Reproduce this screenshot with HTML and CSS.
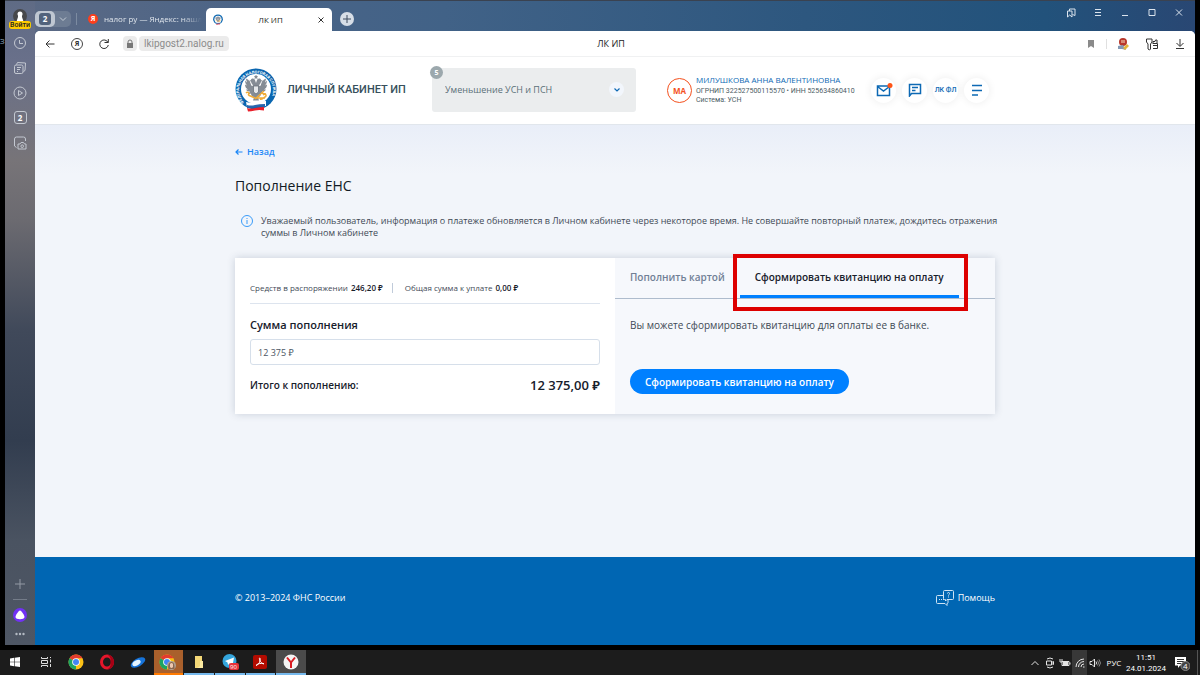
FILE: index.html
```html
<!DOCTYPE html>
<html lang="ru">
<head>
    <meta charset="UTF-8">
    <meta name="viewport" content="width=device-width, initial-scale=1.0">
    <title>ЛК ИП</title>
    <link rel="stylesheet" href="styles.css">
</head>
<body>
    <svg class="sprite" aria-hidden="true">
        <defs>
            <path id="ringPath" d="M9 34.500 A17 17 0 1 1 33 34.500"/>
            <symbol id="emblem" viewBox="0 0 42 44">
                <circle cx="21" cy="21" r="20.500" fill="#0a66b0"/>
                <circle cx="21" cy="21" r="15" fill="#fff"/>
                <g fill="#858c95">
                    <path d="M21 7l1 1h1l-1 1.500 1 1h-4l1-1L19 8h1z"/>
                    <path d="M20 12c-1-2-4-2-4 0l-2 1 2 .5c0 2 2 3 2 4-1 1-2 0-2-1-1-4-3-5-5-6 0 2 1 3 1 4l-2-2c0 2 1 4 2 5l-2-1c0 2 1 4 3 5l-2 0c1 2 3 2 4 2l-2 3 3-1c0 2 1 3 3 4l-1 3h6l-1-3c2-1 3-2 3-4l3 1-2-3c1 0 3 0 4-2h-2c2-1 3-3 3-5l-2 1c1-1 2-3 2-5l-2 2c0-1 1-2 1-4-2 1-4 2-5 6 0 1-1 2-2 1 0-1 2-2 2-4l2-.5-2-1c0-2-3-2-4 0l-1 3z"/>
                </g>
                <path d="M18.500 18h5v6L21 26l-2.500-2z" fill="#e4e7ea" stroke="#6a727c" stroke-width=".8"/>
                <path d="M11 25c2-2 4 0 2 2m0 0l7 3 10 0M29 23l-9 8M28 27c3-2 4 1 2 2s-3 3-5 2M26 25l5 1" fill="none" stroke="#f0ac38" stroke-width="1.500"/>
                <path d="M11 34q5 1 9 0t11-1v5q-6-1-10 0t-9 1z" fill="#fff"/>
                <path d="M12 37q4 1 8 0t10-1v3q-5-1-9 0t-9 1z" fill="#2a66ad"/>
                <path d="M12 40q4 1 8 0t9-1v3.500q-5-1-9 0t-7 1z" fill="#e9202b"/>
            </symbol>
            <symbol id="chrome" viewBox="0 0 16 16">
                <circle cx="8" cy="8" r="7.500" fill="#fbc116"/>
                <path d="M8 8L1.500 4.250A7.500 7.500 0 0 1 14.500 4.250z" fill="#e33b2e"/>
                <path d="M8 8L1.500 4.250A7.500 7.500 0 0 0 8 15.500z" fill="#1da462"/>
                <path d="M8 4.250h6.500L11 9.750z" fill="#fbc116"/>
                <circle cx="8" cy="8" r="3.800" fill="#fff"/>
                <circle cx="8" cy="8" r="3" fill="#4285f4"/>
            </symbol>
        </defs>
    </svg>

    <div class="desktop">
        <span class="desktop-label">З</span>

        <div class="browser">
            <aside class="sidebar">
                <button class="login" aria-label="Профиль">
                    <svg width="14" height="14" viewBox="0 0 14 14"><circle cx="7" cy="7" r="7" fill="#47484b"/><circle cx="7" cy="5" r="2.500" fill="#fff"/><path d="M5 6h4v2l2 6H3l2-6z" fill="#fff"/></svg>
                    <span class="login-badge">Войти</span>
                </button>
                <button class="side-btn" aria-label="История">
                    <svg width="14" height="14" viewBox="0 0 14 14"><circle cx="7" cy="7" r="5.500"/><path d="M6.500 4v3.500H10"/></svg>
                </button>
                <button class="side-btn" aria-label="Коллекции">
                    <svg width="14" height="14" viewBox="0 0 14 14"><path d="M3.500 3.500l1-2 8 .5-.5 7.500-1.500 1"/><rect x="1.500" y="4" width="8.500" height="8.500" rx="1.500"/><path d="M4 6.500h4M4 8.500h3M4 10.500h1"/></svg>
                </button>
                <button class="side-btn" aria-label="Видео">
                    <svg width="14" height="14" viewBox="0 0 14 14"><circle cx="7" cy="7" r="6"/><path d="M5.500 4.500v5L9.500 7z"/></svg>
                </button>
                <button class="side-btn" aria-label="Вкладки">
                    <span class="tab-count">2</span>
                </button>
                <button class="side-btn" aria-label="Скриншот">
                    <svg width="14" height="14" viewBox="0 0 14 14"><path d="M3.500 11.500L1.500 10V3q0-2 2-2h7q2 0 2 2v2"/><path d="M5 8h2l1-1.500h2.500L11.500 8H13v5H5z"/><circle cx="9.200" cy="10.200" r="1.300"/></svg>
                </button>
                <div class="side-bottom">
                    <button class="side-plus" aria-label="Добавить">
                        <svg width="10" height="10" viewBox="0 0 10 10"><path d="M5 0v10M0 5h10"/></svg>
                    </button>
                    <span class="side-line"></span>
                    <button class="alice" aria-label="Алиса">
                        <svg width="14" height="14" viewBox="0 0 14 14"><circle cx="7" cy="7" r="7" fill="#7131f5"/><path d="M7 2.500c1.500 0 4.500 5 4.500 6.500 0 3-9 3-9 0C2.500 7.500 5.500 2.500 7 2.500z" fill="#fff"/></svg>
                    </button>
                    <button class="side-more" aria-label="Ещё">
                        <svg width="10" height="4" viewBox="0 0 10 4"><circle cx="1.500" cy="2" r="1.200"/><circle cx="5" cy="2" r="1.200"/><circle cx="8.500" cy="2" r="1.200"/></svg>
                    </button>
                </div>
            </aside>

            <div class="window">
                <div class="tabbar">
                    <button class="group">
                        <span class="group-num"><b>2</b></span>
                        <svg width="8" height="6" viewBox="0 0 8 6"><path d="M1 1.500l3 3 3-3" fill="none" stroke="#c4ccd6"/></svg>
                    </button>
                    <span class="tab-sep"></span>
                    <a class="tab" href="#">
                        <span class="ya-icon">Я</span>
                        <span class="tab-title">налог ру — Яндекс: нашл</span>
                    </a>
                    <div class="tab-active">
                        <svg width="10" height="11"><use href="#emblem"/></svg>
                        <span>ЛК ИП</span>
                        <button aria-label="Закрыть вкладку"><svg width="6" height="6" viewBox="0 0 6 6"><path d="M.5.5l5 5M5.500.5l-5 5" stroke="#333"/></svg></button>
                    </div>
                    <button class="new-tab" aria-label="Новая вкладка">
                        <svg width="8" height="8" viewBox="0 0 8 8"><path d="M4 0v8M0 4h8" stroke="#3c4a5e"/></svg>
                    </button>
                    <div class="controls">
                        <button aria-label="Закладки"><svg width="10" height="10" viewBox="0 0 10 10"><path d="M1.500 3H6v6L3.700 7 1.500 9zM3.500 3V1H9v6.500L6.500 6.500"/></svg></button>
                        <button aria-label="Меню"><svg width="10" height="10" viewBox="0 0 10 10"><path d="M2 1.500h6M2 4.500h6M2 7.500h6"/></svg></button>
                        <button aria-label="Свернуть"><svg width="10" height="10" viewBox="0 0 10 10"><path d="M2 7.500h6"/></svg></button>
                        <button aria-label="Развернуть"><svg width="10" height="10" viewBox="0 0 10 10"><path d="M2 1.500h6v6H2z"/></svg></button>
                        <button aria-label="Закрыть"><svg width="10" height="10" viewBox="0 0 10 10"><path d="M2 1.500l6 6M8 1.500l-6 6"/></svg></button>
                    </div>
                </div>

                <div class="page">
                    <div class="toolbar">
                        <div class="nav">
                            <button aria-label="Назад"><svg width="12" height="12" viewBox="0 0 12 12"><path d="M10.500 6H2M5.500 2.500L2 6l3.500 3.500"/></svg></button>
                            <button class="ya-round" aria-label="Яндекс">Я</button>
                            <button aria-label="Обновить"><svg width="12" height="12" viewBox="0 0 12 12"><path d="M10 4.500A4.300 4.300 0 1 0 10.300 7M6.500 4.500h3.800V1"/></svg></button>
                            <div class="address">
                                <button class="lock" aria-label="Защищённое соединение"><svg width="8" height="10" viewBox="0 0 8 10"><path d="M2 5V3a2 2 0 0 1 4 0v2" fill="none" stroke="#777"/><rect x="1" y="4" width="6" height="5" fill="#777" stroke="none"/></svg></button>
                                <a class="url" href="#">lkipgost2.nalog.ru</a>
                            </div>
                        </div>
                        <span class="toolbar-title">ЛК ИП</span>
                        <div class="tools">
                            <button aria-label="В закладки"><svg width="12" height="12" viewBox="0 0 12 12"><path d="M3 2h6v8L6 8l-3 2z" fill="#8a8a8a" stroke="none"/></svg></button>
                            <span class="tool-sep"></span>
                            <button aria-label="Расширение"><svg width="14" height="14" viewBox="0 0 14 14"><g stroke="none"><circle cx="7" cy="5" r="4" fill="#b8372a"/><path d="M5 3h4v3H5z" fill="#d88a74"/><path d="M2 9l5-1 3 5-4-1-4 0z" fill="#8398b4"/><path d="M7 11l4-4 2 2-4 4z" fill="#e2b43b"/></g></svg></button>
                            <button aria-label="Пароли"><svg width="14" height="14" viewBox="0 0 14 14"><path d="M3 7L1.500 5V2H7v3L5.500 7v5L4.500 13 3 12zM7.500 6.500h5v5H8"/><path d="M8 6V4.500h2l.5-1.500h1.500v3M8 8.500h4"/></svg></button>
                            <button aria-label="Загрузки"><svg width="12" height="12" viewBox="0 0 12 12"><path d="M6 1v7M2.500 5L6 8.500 9.500 5M2 10.500h8"/></svg></button>
                        </div>
                    </div>

                    <header class="header">
                        <div class="container header-row">
                            <a class="brand" href="#">
                                <svg width="42" height="44" viewBox="0 0 42 44">
                                    <use href="#emblem"/>
                                    <text class="ring-text"><textPath href="#ringPath">ФЕДЕРАЛЬНАЯ НАЛОГОВАЯ СЛУЖБА</textPath></text>
                                </svg>
                                <span>ЛИЧНЫЙ КАБИНЕТ ИП</span>
                            </a>
                            <div class="notice">
                                <select aria-label="Уведомления">
                                    <option>Уменьшение УСН и ПСН</option>
                                </select>
                                <span class="notice-count">5</span>
                                <span class="notice-arrow"><svg width="6" height="4" viewBox="0 0 6 4"><path d="M.5.5L3 3 5.500.5" fill="none" stroke="#0d69b4" stroke-width="1.200"/></svg></span>
                            </div>
                            <div class="user">
                                <span class="avatar">МА</span>
                                <div>
                                    <a class="user-name" href="#">МИЛУШКОВА АННА ВАЛЕНТИНОВНА</a>
                                    <p>ОГРНИП 322527500115570 • ИНН 525634860410</p>
                                    <p>Система: УСН</p>
                                </div>
                            </div>
                            <nav class="actions">
                                <button aria-label="Сообщения"><svg width="18" height="16" viewBox="0 0 18 16"><path d="M2.500 4h12v9.500h-12zM2.500 4.500l6 4.500 6-4.500"/><circle cx="15" cy="3.500" r="2.500" fill="#ff5416" stroke="none"/></svg></button>
                                <button aria-label="Чат"><svg width="14" height="14" viewBox="0 0 14 14"><path d="M1.500 13V1.500h11v9h-9zM4 4.500h6M4 7.500h3.500"/></svg></button>
                                <button>ЛК ФЛ</button>
                                <button aria-label="Меню"><svg width="12" height="12" viewBox="0 0 12 12"><path d="M1 1.500h10M1 6.500h10M1 11h6"/></svg></button>
                            </nav>
                        </div>
                    </header>

                    <main class="main">
                        <div class="container">
                            <a class="back" href="#">
                                <svg width="8" height="6" viewBox="0 0 8 6"><path d="M7.500 3H1M3.500.5L1 3l2.500 2.500" fill="none" stroke="#1a86f7" stroke-width="1.200"/></svg>
                                Назад
                            </a>
                            <h1>Пополнение ЕНС</h1>
                            <div class="info">
                                <svg width="12" height="12" viewBox="0 0 12 12"><circle cx="6" cy="6" r="5.500" fill="none" stroke="#3a9bf8"/><path d="M6 3v1M6 5v4" stroke="#3a9bf8"/></svg>
                                <p>Уважаемый пользователь, информация о платеже обновляется в Личном кабинете через некоторое время. Не совершайте повторный платеж, дождитесь отражения суммы в Личном кабинете</p>
                            </div>

                            <section class="card">
                                <form class="payment">
                                    <div class="balance">
                                        <span>Средств в распоряжении <b>246,20 ₽</b></span>
                                        <span class="balance-due">Общая сумма к уплате <b>0,00 ₽</b></span>
                                    </div>
                                    <label for="amount">Сумма пополнения</label>
                                    <input type="text" id="amount" name="amount" value="12 375 ₽">
                                    <div class="total">
                                        <span>Итого к пополнению:</span>
                                        <strong>12 375,00 ₽</strong>
                                    </div>
                                </form>
                                <div class="method">
                                    <div class="tabs" role="tablist">
                                        <button role="tab" class="method-tab">Пополнить картой</button>
                                        <button role="tab" class="method-tab selected" aria-selected="true">Сформировать квитанцию на оплату</button>
                                    </div>
                                    <div class="method-body">
                                        <p>Вы можете сформировать квитанцию для оплаты ее в банке.</p>
                                        <button class="submit">Сформировать квитанцию на оплату</button>
                                    </div>
                                </div>
                            </section>
                        </div>
                    </main>

                    <footer class="footer">
                        <div class="container footer-row">
                            <span>© 2013–2024 ФНС России</span>
                            <a class="help" href="#">
                                <svg width="18" height="16" viewBox="0 0 18 16" fill="none" stroke="#cfe3f4"><path d="M8 5.500H1.500q-1 0-1 1v6q0 1 1 1H9l2 2v-2q1 0 1-1V10M3 9.500h1M5 9.500h1M7 9.500h1"/><path d="M8.500.5h8q1 0 1 1v7q0 1-1 1H11L9.500 11V9.500H8.500q-1 0-1-1v-7q0-1 1-1z"/><path d="M11.500 3.500q0-1 1-1t1 1-1 1.500v.5M12.500 6.500v1"/></svg>
                                Помощь
                            </a>
                        </div>
                    </footer>
                </div>
            </div>
        </div>

        <div class="taskbar">
            <div class="apps">
                <button aria-label="Пуск"><svg width="12" height="12" viewBox="0 0 12 12" fill="#fff"><path d="M1 2.500l4.200-.7v3.900H1zM5.800 1.700L11 1v4.700H5.800zM1 6.300h4.200v3.900L1 9.500zM5.800 6.300H11V11l-5.200-.7z"/></svg></button>
                <button aria-label="Представление задач"><svg width="12" height="12" viewBox="0 0 12 12" fill="none" stroke="#ddd"><path d="M1.500 1v1.500h6V1M1.500 11V9.500h6V11M1.500 4.500h6v3h-6zM10.500 1v1M10.500 3.500v3M10.500 8v3"/></svg></button>
                <button aria-label="Chrome"><svg width="16" height="16"><use href="#chrome"/></svg></button>
                <button aria-label="Opera"><svg width="16" height="16" viewBox="0 0 16 16"><ellipse cx="8" cy="8" rx="5.500" ry="6" fill="none" stroke="#e5162b" stroke-width="3"/><path d="M8 .5a7 7.500 0 0 1 0 15 5 6 0 0 0 3.500-4V4.500A5 6 0 0 0 8 .5z" fill="#a70014"/></svg></button>
                <button aria-label="Диск"><svg width="16" height="16" viewBox="0 0 16 16"><ellipse cx="8" cy="8.500" rx="8" ry="4" transform="rotate(-30 8 8.500)" fill="#1673d9"/><ellipse cx="6.500" cy="9" rx="4.500" ry="2.500" transform="rotate(-30 6.500 9)" fill="#e5f4ff"/></svg></button>
                <button class="app-alert" aria-label="Chrome, профиль"><svg width="18" height="16" viewBox="0 0 18 16"><use href="#chrome" width="16" height="16"/><circle cx="12.500" cy="11.500" r="4.500" fill="#b0a294"/><path d="M9.500 15c-1-3 0-7 3-7s3 4 3 7" fill="#8a6750"/><path d="M11 10q1.500-2 3 0v3q-1.500 2-3 0z" fill="#efc9b0"/></svg></button>
                <button class="app-open" aria-label="Проводник"><svg width="12" height="14" viewBox="0 0 12 14"><path d="M2 1h7v12H2z" fill="#f3d777"/><path d="M7 6h3v7H4l3-2z" fill="#fbe9a1"/></svg></button>
                <button class="app-open" aria-label="Telegram"><svg width="18" height="16" viewBox="0 0 18 16"><circle cx="8.500" cy="7" r="7" fill="#34a5dc"/><path d="M4 7l9-3.500-1.500 8-3-2-1.500 1.500-.5-2.500z" fill="#fff"/><rect x="8" y="9" width="10" height="7" rx="2" fill="#e8323a"/><text x="9" y="15" class="unread">90</text></svg></button>
                <button class="app-open" aria-label="Acrobat"><svg width="14" height="14" viewBox="0 0 14 14"><rect width="14" height="14" rx="2" fill="#b30b00"/><path d="M3 10.500c3-1 4.500-4 4.200-7C7 2.500 6 3 6.500 4.500c.8 2.800 2.500 4 4.500 4.300M3 10.500c1.500-2 5-2.500 8-1.700" fill="none" stroke="#fff"/></svg></button>
                <button class="app-open app-current" aria-label="Яндекс Браузер"><svg width="16" height="16" viewBox="0 0 16 16"><circle cx="8" cy="8" r="7.500" fill="#f4f4f4"/><path d="M4 3.500l4 5 4-5M8 8.500V14" fill="none" stroke="#d91c22" stroke-width="2"/></svg></button>
            </div>
            <div class="tray">
                <button aria-label="Скрытые значки"><svg width="10" height="10" viewBox="0 0 10 10"><path d="M1.500 7L5 3.500 8.500 7"/></svg></button>
                <button aria-label="Камера"><svg width="10" height="12" viewBox="0 0 10 12"><path d="M1.500 4h5v4h-5zM6.500 5.500l2-1v3l-2-1M2 2q3-2 6 0M2 10q3 2 6 0"/></svg></button>
                <button aria-label="Батарея"><svg width="12" height="10" viewBox="0 0 12 10"><path d="M3 3.500h7v4H3zM11 4.500v2M1 1v3h2V1"/><path d="M4 5.500h5" stroke-width="3"/></svg></button>
                <button class="wifi" aria-label="Сеть"><svg width="10" height="10" viewBox="0 0 10 10"><path d="M1 9a8 8 0 0 1 8-8M3.500 9A5.500 5.500 0 0 1 9 3.500M6 9a3 3 0 0 1 3-3M8 9h1.500"/></svg></button>
                <button aria-label="Звук"><svg width="12" height="10" viewBox="0 0 12 10"><path d="M1 3.500h2L5.500 1v8L3 6.500H1zM7 3.500q1 1.500 0 3"/><path d="M8.500 2.500q2 2.500 0 5M10 1.500q3 3.500 0 7" stroke="#888"/></svg></button>
                <button class="lang">РУС</button>
                <button class="clock"><time>11:51</time><span>24.01.2024</span></button>
                <button class="alerts" aria-label="Уведомления"><svg width="16" height="16" viewBox="0 0 16 16"><path d="M1 2h11v8.500H6L4 13v-2.500H1z" fill="#fff" stroke="none"/><path d="M3 4.500h7M3 6.500h7M3 8.500h4" stroke="#333"/><circle cx="11.500" cy="11" r="4.500" fill="#444" stroke="#888"/><text x="9" y="14" class="alert-num">4</text></svg></button>
            </div>
        </div>
    </div>
</body>
</html>
```
FILE: styles.css
```css
* {
    box-sizing: border-box;
}

body {
    margin: 0;
    font-family: 'Open Sans', 'Noto Sans', sans-serif;
    font-size: 9px;
    line-height: 12px;
    color: #3f4a56;
    background: #000;
}

button {
    display: flex;
    justify-content: center;
    align-items: center;
    padding: 0;
    border: none;
    background: none;
    font: inherit;
    color: inherit;
    cursor: pointer;
}

a {
    color: inherit;
    text-decoration: none;
}

p {
    margin: 0;
}

svg {
    display: block;
    flex: none;
}

.sprite {
    position: absolute;
    width: 0;
    height: 0;
}

.desktop {
    display: flex;
    flex-direction: column;
    min-height: 100vh;
    position: relative;
}

.desktop-label {
    position: absolute;
    left: 0;
    top: 35px;
    color: #8fa3b8;
    font-size: 8px;
}

/* Browser window */
.browser {
    flex: 1;
    display: flex;
    margin: 0 5px 5px;
    border-top: 1px solid #3a4250;
    background: linear-gradient(to right, #5d6a84 0, #4a6487 260px, #416287 440px, #2d577f 800px, #22527b 1040px, #294773 100%);
}

.sidebar {
    width: 30px;
    display: flex;
    flex-direction: column;
    align-items: center;
    background: linear-gradient(#5f6b85 0, #69708a 60px, #777478 160px, #6b6a70 220px, #40495a 330px, #323d4f 440px, #4a5361 540px, #4e5664 100%);
}

.sidebar svg {
    fill: none;
    stroke: #c3c8d1;
}

.login {
    position: relative;
    height: 29px;
    width: 30px;
}

.sidebar .login svg,
.sidebar .alice svg {
    stroke: none;
}

.login-badge {
    position: absolute;
    left: 4px;
    right: 4px;
    bottom: 1px;
    border-radius: 3px;
    background: #ffcc00;
    color: #222;
    font-family: Roboto, sans-serif;
    font-size: 7px;
    font-weight: 500;
    line-height: 8px;
}

.side-btn {
    width: 30px;
    height: 25px;
}

.tab-count {
    width: 13px;
    height: 13px;
    border: 1px solid #c3c8d1;
    border-radius: 3px;
    color: #fff;
    font-size: 8px;
    font-weight: 700;
    line-height: 11px;
}

.side-bottom {
    margin-top: auto;
    display: flex;
    flex-direction: column;
    align-items: center;
    gap: 8px;
    padding-bottom: 9px;
}

.side-plus {
    height: 14px;
}

.side-plus svg {
    opacity: .6;
}

.side-line {
    width: 14px;
    height: 1px;
    background: #747c89;
}

.alice {
    margin-bottom: 2px;
}

.sidebar .side-more svg {
    fill: #b4bac4;
    stroke: none;
}

.window {
    flex: 1;
    min-width: 0;
    display: flex;
    flex-direction: column;
}

.tabbar {
    display: flex;
    height: 30px;
    padding-top: 7px;
    color: #fff;
}

.group {
    width: 36px;
    height: 16px;
    margin-top: 3px;
    padding-right: 4px;
    justify-content: space-between;
    border-radius: 5px;
    background: #6d7c93;
}

.group-num {
    width: 20px;
    height: 16px;
    padding: 2px 4px;
    border-radius: 5px;
    background: #bfc7d2;
}

.group-num b {
    display: block;
    border-radius: 3px;
    background: #52637c;
    font-size: 8px;
    line-height: 12px;
}

.tab-sep {
    width: 1px;
    height: 12px;
    margin: 5px 11px 0 5px;
    background: #7c8ba1;
}

.tab {
    display: flex;
    align-items: center;
    gap: 6px;
    width: 112px;
    margin-right: 6px;
    height: 22px;
    font-size: 8px;
}

.ya-icon {
    flex: none;
    width: 10px;
    height: 10px;
    border-radius: 50%;
    background: #fc3f1d;
    font-size: 7px;
    font-weight: 700;
    line-height: 10px;
    text-align: center;
}

.tab-title {
    white-space: nowrap;
    color: #dfe5ec;
    -webkit-mask-image: linear-gradient(to right, #000 80%, transparent);
    mask-image: linear-gradient(to right, #000 80%, transparent);
}

.tab-active {
    width: 126px;
    display: flex;
    justify-content: space-between;
    align-items: center;
    padding: 0 8px 0 7px;
    border-radius: 5px 5px 0 0;
    background: #fff;
    color: #222;
    font-size: 8px;
}

.new-tab {
    width: 14px;
    height: 14px;
    margin: 4px 0 0 8px;
    border-radius: 50%;
    background: #d7dee7;
}

.controls {
    display: flex;
    gap: 17px;
    margin: 0 11px 0 auto;
    height: 10px;
}

.controls svg {
    fill: none;
    stroke: #dbe4ee;
}

.page {
    flex: 1;
    display: flex;
    flex-direction: column;
    border-radius: 5px 5px 0 0;
    overflow: hidden;
    background: #f2f5fa;
}

.toolbar {
    display: flex;
    align-items: center;
    justify-content: space-between;
    height: 26px;
    padding: 0 9px;
    border-bottom: 1px solid #f0f1f2;
    background: #fff;
}

.toolbar svg {
    fill: none;
    stroke: #333;
}

.nav,
.tools {
    flex: 1;
    display: flex;
    align-items: center;
    gap: 15px;
}

.ya-round {
    width: 12px;
    height: 12px;
    border: 1px solid #444;
    border-radius: 50%;
    font-size: 7px;
    font-weight: 700;
    color: #333;
}

.address {
    display: flex;
    gap: 2px;
    margin-left: -2px;
}

.lock,
.url {
    height: 15px;
    border-radius: 4px;
    background: #ebebeb;
}

.lock {
    width: 14px;
}

.url {
    padding: 0 5px;
    color: #8b8b8b;
    font-family: Roboto, 'Open Sans', sans-serif;
    font-size: 10px;
    line-height: 15px;
}

.toolbar-title {
    margin-right: 8px;
    color: #222;
}

.tools {
    justify-content: flex-end;
}

.tool-sep {
    width: 1px;
    height: 10px;
    margin: 0 -6px;
    background: #e0e0e0;
}

/* Site header */
.container {
    width: 100%;
    max-width: 760px;
    margin: 0 auto;
}

.header {
    height: 68px;
    padding-top: 11px;
    border-bottom: 1px solid #e1e6ec;
    background: #fff;
}

.header-row {
    display: flex;
    align-items: center;
    padding-right: 6px;
}

.brand {
    display: flex;
    align-items: center;
    gap: 10px;
    width: 197px;
    color: #37505c;
    font-family: Roboto, 'Open Sans', sans-serif;
    font-size: 11px;
    font-weight: 500;
    white-space: nowrap;
}

.ring-text {
    fill: #fff;
    font-family: Roboto, sans-serif;
    font-size: 4px;
    font-weight: 700;
}

.notice {
    position: relative;
    width: 204px;
}

.notice select {
    display: block;
    width: 100%;
    height: 44px;
    padding: 0 30px 0 13px;
    border: none;
    border-radius: 3px;
    background: #ebedee;
    color: #5a7078;
    font: inherit;
    appearance: none;
}

.notice-count {
    position: absolute;
    left: -2px;
    top: -2px;
    width: 13px;
    height: 13px;
    border-radius: 50%;
    background: #9ca8ad;
    color: #fff;
    font-size: 7px;
    font-weight: 700;
    line-height: 13px;
    text-align: center;
}

.notice-arrow {
    position: absolute;
    right: 12px;
    top: 14px;
    width: 15px;
    height: 15px;
    display: flex;
    justify-content: center;
    align-items: center;
    border-radius: 50%;
    background: #f2f6fc;
    pointer-events: none;
}

.user {
    display: flex;
    align-items: center;
    gap: 4px;
    margin-left: 31px;
    color: #4b5b63;
    font-size: 7px;
    line-height: 9px;
    white-space: nowrap;
}

.user p {
    font-family: Roboto, 'Open Sans', sans-serif;
}

.avatar {
    width: 25px;
    height: 25px;
    border: 1px solid #f4511e;
    border-radius: 50%;
    color: #f4511e;
    font-size: 8px;
    font-weight: 700;
    line-height: 23px;
    text-align: center;
}

.user-name {
    display: block;
    padding-bottom: 2px;
    color: #0d69b4;
    font-size: 8px;
    line-height: 10px;
}

.actions {
    display: flex;
    gap: 6px;
    margin-left: auto;
}

.actions button {
    width: 25px;
    height: 25px;
    border-radius: 50%;
    background: #fff;
    box-shadow: 0 0 8px rgba(0, 0, 0, 0.08);
    color: #0d69b4;
    font-family: Roboto, 'Open Sans', sans-serif;
    font-size: 7px;
    font-weight: 500;
    white-space: nowrap;
}

.actions svg {
    fill: none;
    stroke: #0d69b4;
    stroke-width: 1.5;
}

/* Content */
.main {
    flex: 1;
    padding: 21px 0;
    background: linear-gradient(#e9eef8, #f2f5fa 50px);
}

.back {
    display: inline-flex;
    align-items: center;
    gap: 4px;
    color: #1a86f7;
    font-weight: 600;
}

h1 {
    margin: 18px 0 19px;
    color: #111a24;
    font-size: 14px;
    font-weight: 500;
    line-height: 20px;
}

.info {
    display: flex;
    gap: 8px;
    margin-right: -8px;
    padding-left: 6px;
}

.card {
    display: grid;
    grid-template-columns: 1fr 1fr;
    margin-top: 19px;
    background: #fff;
    box-shadow: 0 0 8px rgba(40, 60, 90, 0.2);
}

.payment {
    padding: 15px;
}

.balance {
    display: flex;
    align-items: center;
    height: 31px;
    border-bottom: 1px solid #dde4ee;
    font-size: 8px;
}

.balance b {
    margin-left: 1px;
    color: #17202b;
    font-weight: 600;
}

.balance-due {
    margin-left: 9px;
    padding-left: 12px;
    border-left: 1px solid #c0cbda;
    line-height: 10px;
}

.payment label {
    display: block;
    margin: 13px 0 6px;
    color: #17202b;
    font-size: 11px;
    font-weight: 600;
    line-height: 16px;
}

.payment input {
    width: 100%;
    height: 26px;
    padding: 0 7px;
    border: 1px solid #d6dfea;
    border-radius: 3px;
    color: #4b5663;
    font: inherit;
}

.total {
    display: flex;
    justify-content: space-between;
    align-items: center;
    margin-top: 10px;
    color: #17202b;
    font-size: 10px;
    font-weight: 600;
    line-height: 20px;
}

.total strong {
    font-size: 13px;
    font-weight: 600;
}

.method {
    background: #f6f8fc;
}

.tabs {
    display: flex;
    height: 41px;
    border-bottom: 1px solid #aebccd;
}

.method-tab {
    position: relative;
    padding: 0 15px 3px;
    color: #718096;
    font-size: 10px;
    font-weight: 600;
    white-space: nowrap;
}

.selected {
    padding-bottom: 0;
    border-bottom: 3px solid #0080ff;
    color: #17202b;
}

.selected::after {
    content: '';
    position: absolute;
    inset: -4px -9px -16px -7px;
    border: 4px solid #dd0000;
}

.method-body {
    padding: 18px 15px 20px;
    font-size: 10px;
    line-height: 16px;
}

.submit {
    height: 25px;
    margin-top: 36px;
    padding: 0 15px;
    border-radius: 13px;
    background: #0080ff;
    color: #fff;
    font-weight: 600;
}

.footer {
    display: flex;
    align-items: center;
    height: 88px;
    padding-bottom: 6px;
    background: #0066b3;
    color: #fff;
}

.footer-row,
.help {
    display: flex;
    align-items: center;
    justify-content: space-between;
}

.help {
    gap: 4px;
}

/* Taskbar */
.taskbar {
    display: flex;
    justify-content: space-between;
    height: 25px;
    background: #1c1c1c;
    color: #fff;
}

.apps,
.tray {
    display: flex;
}

.apps {
    gap: 1px;
    width: 306px;
}

.apps button {
    flex: 1;
    border-bottom: 2px solid transparent;
}

.apps .app-open {
    border-bottom-color: #76b9ed;
}

.apps .app-alert {
    border-bottom-color: #ff7a00;
    background: #a9602c;
}

.apps .app-current {
    background: #4b4b4b;
}

.unread {
    fill: #fff;
    font-size: 6px;
}

.tray button {
    width: 15px;
}

.tray svg {
    fill: none;
    stroke: #e4e4e4;
}

.tray .wifi {
    background: #383838;
}

.tray .lang {
    width: 24px;
    font-size: 8px;
}

.tray .clock {
    width: 40px;
    flex-direction: column;
    font-family: Roboto, 'Open Sans', sans-serif;
    font-size: 8px;
    line-height: 11px;
}

.tray .alerts {
    width: 32px;
    margin-right: 2px;
    border-right: 1px solid #555;
}

.tray .alert-num {
    fill: #fff;
    stroke: none;
    font-size: 8px;
}
```
